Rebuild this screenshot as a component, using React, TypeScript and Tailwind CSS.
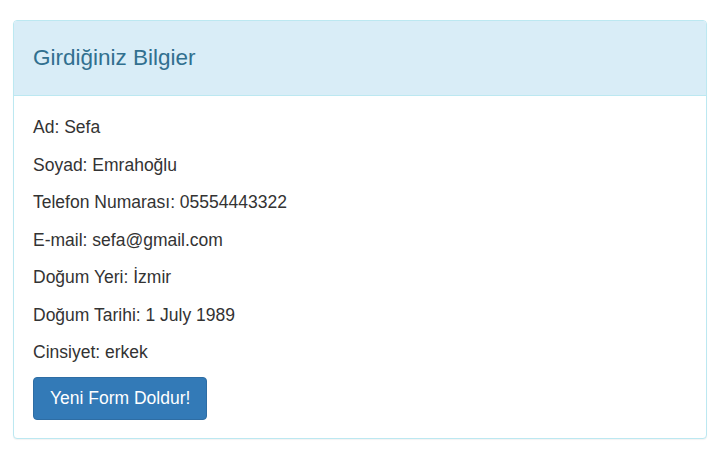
export default function App() {
  const rows = [
    "Ad: Sefa",
    "Soyad: Emrahoğlu",
    "Telefon Numarası: 05554443322",
    "E-mail: sefa@gmail.com",
    "Doğum Yeri: İzmir",
    "Doğum Tarihi: 1 July 1989",
    "Cinsiyet: erkek",
  ]

  return (
    <div className="min-h-screen bg-white pt-[20px] pl-[13px] pr-[12px] font-['Liberation_Sans',Arial,sans-serif] text-[#333]">
      {/* Panel */}
      <div className="rounded-[4px] border border-[#bce8f1] bg-white shadow-[0_1px_1px_rgba(0,0,0,0.05)]">
        <div className="h-[75px] flex items-center rounded-t-[3px] border-b border-[#bce8f1] bg-[#d9edf7] px-[19px]">
          <h3 className="text-[22.5px] text-[#31708f] leading-none">Girdiğiniz Bilgier</h3>
        </div>
        <div className="px-[19px] pt-[19px] pb-[18px]">
          <div className="flex flex-col gap-[13.5px]">
            {rows.map((r) => (
              <p key={r} className="text-[17.5px] leading-[24px]">
                {r}
              </p>
            ))}
          </div>
          <button className="mt-[13px] h-[43px] rounded-[4px] border border-[#2e6da4] bg-[#337ab7] px-[16px] text-[17.5px] text-white">
            Yeni Form Doldur!
          </button>
        </div>
      </div>
    </div>
  )
}
